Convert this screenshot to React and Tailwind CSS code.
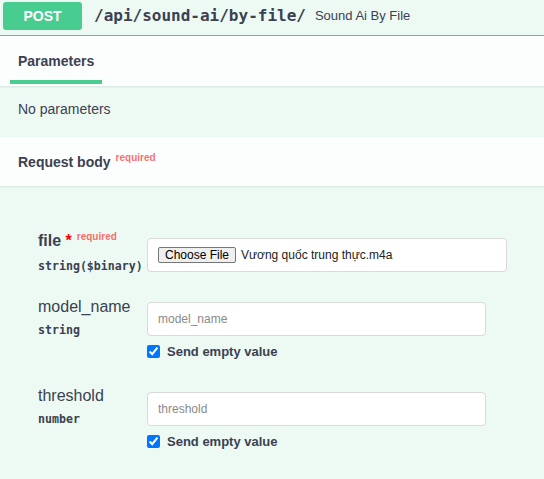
export default function App() {
  return (
    <div className="h-[479px] w-[544px] overflow-hidden bg-[#edfaf4] font-['Liberation_Sans',Arial,sans-serif] text-[#3b4151]">
      {/* Summary bar */}
      <div className="flex items-center h-[36px] pt-[2px] pb-[5px] border-b border-[#49cc90]">
        <div className="ml-[3px] w-[79px] h-[28px] rounded-[3px] bg-[#49cc90] flex items-center justify-center text-white text-[14px] font-bold">
          POST
        </div>
        <span className="ml-[12px] font-['DejaVu_Sans_Mono',monospace] text-[16px] font-bold whitespace-nowrap">
          /api/sound-ai/by-file/
        </span>
        <span className="ml-[9px] text-[13px] whitespace-nowrap">Sound Ai By File</span>
      </div>

      {/* Tabs */}
      <div className="relative z-10 h-[50px] bg-white/80 shadow-[0_1px_2px_rgba(0,0,0,0.1)] pl-[10px]">
        <div className="w-fit flex flex-col">
          <span className="mt-[17px] px-[8px] text-[14px] leading-[16px] font-bold">Parameters</span>
          <div className="mt-[11px] h-[4px] bg-[#49cc90]" />
        </div>
      </div>

      <div className="h-[51px] pt-[15px] pl-[18px] text-[14px] leading-[16px]">No parameters</div>

      {/* Request body header */}
      <div className="relative z-10 h-[49px] bg-white/80 shadow-[0_1px_2px_rgba(0,0,0,0.1)] pl-[18px] flex items-center">
        <h4 className="text-[14px] font-bold leading-[16px] mt-[2px]">
          Request body
          <span className="relative -top-[6px] pl-[5px] text-[10px] text-[rgba(255,0,0,0.6)]">required</span>
        </h4>
      </div>

      {/* Form */}
      <div className="pl-[38px] pt-[46px]">
        {/* file */}
        <div className="flex">
          <div className="w-[109px] shrink-0">
            <div className="text-[16px] leading-[18px] font-bold whitespace-nowrap">
              file<span className="text-[#ff0000]">&nbsp;*</span>
              <span className="relative -top-[6px] pl-[5px] text-[10px] text-[rgba(255,0,0,0.6)]">required</span>
            </div>
            <div className="mt-[6px] font-['DejaVu_Sans_Mono',monospace] text-[11.6px] leading-[16px] font-bold whitespace-nowrap">
              string($binary)
            </div>
          </div>
          <div className="pt-[6px]">
            <div className="w-[360px] h-[34px] bg-white border border-[#d9d9d9] rounded-[4px] px-[10px] flex items-center">
              <span className="h-[16px] px-[6px] flex items-center border border-[#767676] rounded-[2px] bg-[#efefef] text-[12px] text-black whitespace-nowrap">
                Choose File
              </span>
              <span className="ml-[5px] text-[12px] text-[#222] whitespace-nowrap">Vương quốc trung thực.m4a</span>
            </div>
          </div>
        </div>

        {/* model_name */}
        <div className="flex mt-[24px]">
          <div className="w-[109px] shrink-0">
            <div className="text-[16px] leading-[18px]">model_name</div>
            <div className="mt-[6px] font-['DejaVu_Sans_Mono',monospace] text-[11.6px] leading-[16px] font-bold">string</div>
          </div>
          <div className="pt-[4px]">
            <input
              type="text"
              placeholder="model_name"
              className="w-[339px] h-[34px] bg-white border border-[#d9d9d9] rounded-[4px] px-[10px] text-[12px] placeholder:text-[#8a8a8a] outline-none"
            />
            <label className="mt-[9px] flex items-center h-[13px]">
              <input type="checkbox" defaultChecked className="m-0 w-[13px] h-[13px]" />
              <span className="ml-[7px] text-[13px] font-bold">Send empty value</span>
            </label>
          </div>
        </div>

        {/* threshold */}
        <div className="flex mt-[29px]">
          <div className="w-[109px] shrink-0">
            <div className="text-[16px] leading-[18px]">threshold</div>
            <div className="mt-[6px] font-['DejaVu_Sans_Mono',monospace] text-[11.6px] leading-[16px] font-bold">number</div>
          </div>
          <div className="pt-[5px]">
            <input
              type="text"
              placeholder="threshold"
              className="w-[339px] h-[34px] bg-white border border-[#d9d9d9] rounded-[4px] px-[10px] text-[12px] placeholder:text-[#8a8a8a] outline-none"
            />
            <label className="mt-[9px] flex items-center h-[13px]">
              <input type="checkbox" defaultChecked className="m-0 w-[13px] h-[13px]" />
              <span className="ml-[7px] text-[13px] font-bold">Send empty value</span>
            </label>
          </div>
        </div>
      </div>
    </div>
  );
}
